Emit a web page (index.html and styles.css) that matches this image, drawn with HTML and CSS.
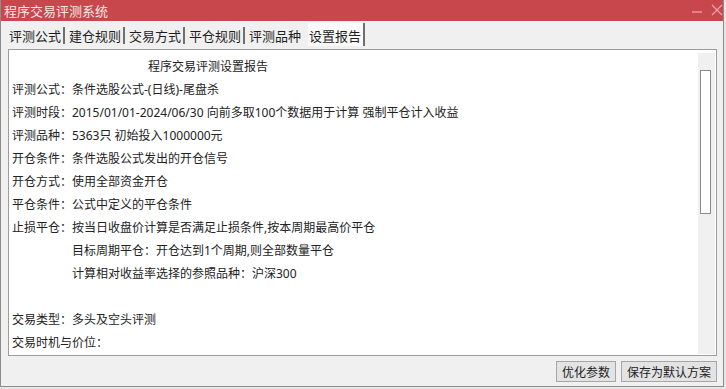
FILE: index.html
```html
<!DOCTYPE html>
<html lang="zh-CN">
<head>
<meta charset="utf-8">
<title>程序交易评测系统</title>
<link rel="stylesheet" href="styles.css">
</head>
<body>
<div class="window">
  <div class="titlebar">
    <span class="title">程序交易评测系统</span>
    <div class="controls">
      <svg class="ctl" width="12" height="12" viewBox="0 0 12 12"><line x1="1" y1="8" x2="11" y2="8" stroke="#f4a9ac" stroke-width="1.2"/></svg>
      <svg class="ctl" width="12" height="12" viewBox="0 0 12 12"><path d="M1 1 L11 11 M11 1 L1 11" stroke="#f4a9ac" stroke-width="1.1" fill="none"/></svg>
    </div>
  </div>
  <div class="tabs">
    <div class="tab">评测公式</div>
    <div class="tab">建仓规则</div>
    <div class="tab">交易方式</div>
    <div class="tab">平仓规则</div>
    <div class="tab nosep">评测品种</div>
    <div class="tab active">设置报告</div>
  </div>
  <div class="frame">
    <div class="report">
      <div class="heading">程序交易评测设置报告</div>
      <div class="row"><span class="lbl">评测公式：</span><span>条件选股公式-(日线)-尾盘杀</span></div>
      <div class="row"><span class="lbl">评测时段：</span><span>2015/01/01-2024/06/30 向前多取100个数据用于计算 强制平仓计入收益</span></div>
      <div class="row"><span class="lbl">评测品种：</span><span>5363只 初始投入1000000元</span></div>
      <div class="row"><span class="lbl">开仓条件：</span><span>条件选股公式发出的开仓信号</span></div>
      <div class="row"><span class="lbl">开仓方式：</span><span>使用全部资金开仓</span></div>
      <div class="row"><span class="lbl">平仓条件：</span><span>公式中定义的平仓条件</span></div>
      <div class="row"><span class="lbl">止损平仓：</span><span>按当日收盘价计算是否满足止损条件,按本周期最高价平仓</span></div>
      <div class="row"><span class="lbl"></span><span>目标周期平仓：开仓达到1个周期,则全部数量平仓</span></div>
      <div class="row"><span class="lbl"></span><span>计算相对收益率选择的参照品种：沪深300</span></div>
      <div class="row"><span class="lbl"></span><span></span></div>
      <div class="row"><span class="lbl">交易类型：</span><span>多头及空头评测</span></div>
      <div class="row"><span class="lbl wide">交易时机与价位：</span></div>
    </div>
    <div class="scrollbar"><div class="thumb"></div></div>
  </div>
  <div class="footer">
    <button class="btn">优化参数</button>
    <button class="btn">保存为默认方案</button>
  </div>
</div>
</body>
</html>
```
FILE: styles.css
```css
html, body {
  margin: 0;
  padding: 0;
}
body {
  width: 726px;
  height: 389px;
  background: #e6e6e6;
  font-family: "Noto Sans CJK SC", "Microsoft YaHei", sans-serif;
  color: #222;
  overflow: hidden;
}
.window {
  box-sizing: border-box;
  width: 724px;
  height: 387px;
  background: #f0f0f0;
  border: 1px solid #8c8c8c;
  border-top: none;
  display: flex;
  flex-direction: column;
}
.titlebar {
  height: 21px;
  background: #c8474c;
  display: flex;
  align-items: center;
  justify-content: space-between;
  padding: 0 0 0 3px;
}
.title {
  color: #fbe6e6;
  font-size: 13px;
  line-height: 21px;
}
.controls {
  display: flex;
  gap: 8px;
  align-items: center;
  margin-top: -2px;
}
.ctl {
  display: block;
}
.tabs {
  box-sizing: border-box;
  height: 28px;
  padding: 6px 0 0 7px;
  display: flex;
  align-items: flex-start;
}
.tab {
  font-size: 13px;
  line-height: 17px;
  height: 17px;
  padding: 0 2px 0 1px;
  margin-right: 3px;
  border-right: 2px solid #6f6f6f;
  color: #1e1e1e;
}
.tab.nosep {
  border-right-color: transparent;
}
.tab.active {
  background: #fafafa;
  margin-top: -4px;
  padding-top: 4px;
  padding-bottom: 2px;
}
.frame {
  box-sizing: border-box;
  margin-left: 7px;
  width: 709px;
  height: 307px;
  border: 1px solid #9d9d9d;
  background: #fff;
  display: flex;
}
.report {
  flex: 1;
  padding: 5px 0 0 3px;
  font-family: "Noto Sans", "Noto Sans CJK SC", sans-serif;
  font-size: 12px;
  line-height: 23px;
  overflow: hidden;
}
.heading {
  padding-left: 136px;
}
.row {
  display: grid;
  grid-template-columns: 60px 1fr;
  height: 23px;
  white-space: nowrap;
}
.lbl.wide {
  grid-column: 1 / 3;
}
.scrollbar {
  width: 17px;
  margin: 3px 1px 1px 0;
  background: #f0f0f0;
  display: flex;
  justify-content: center;
}
.thumb {
  box-sizing: border-box;
  width: 11px;
  height: 144px;
  margin-top: 17px;
  margin-right: 3px;
  background: #fff;
  border: 1px solid #8a8a8a;
}
.footer {
  flex: 1;
  display: flex;
  justify-content: flex-end;
  align-items: flex-start;
  gap: 5px;
  padding: 5px 6px 0 0;
}
.btn {
  font-family: "Noto Sans CJK SC", "Microsoft YaHei", sans-serif;
  font-size: 12px;
  height: 21px;
  line-height: 19px;
  padding: 0 5px;
  background: #e3e3e3;
  border: 1px solid #a6a6a6;
  color: #222;
  margin: 0;
}
```
